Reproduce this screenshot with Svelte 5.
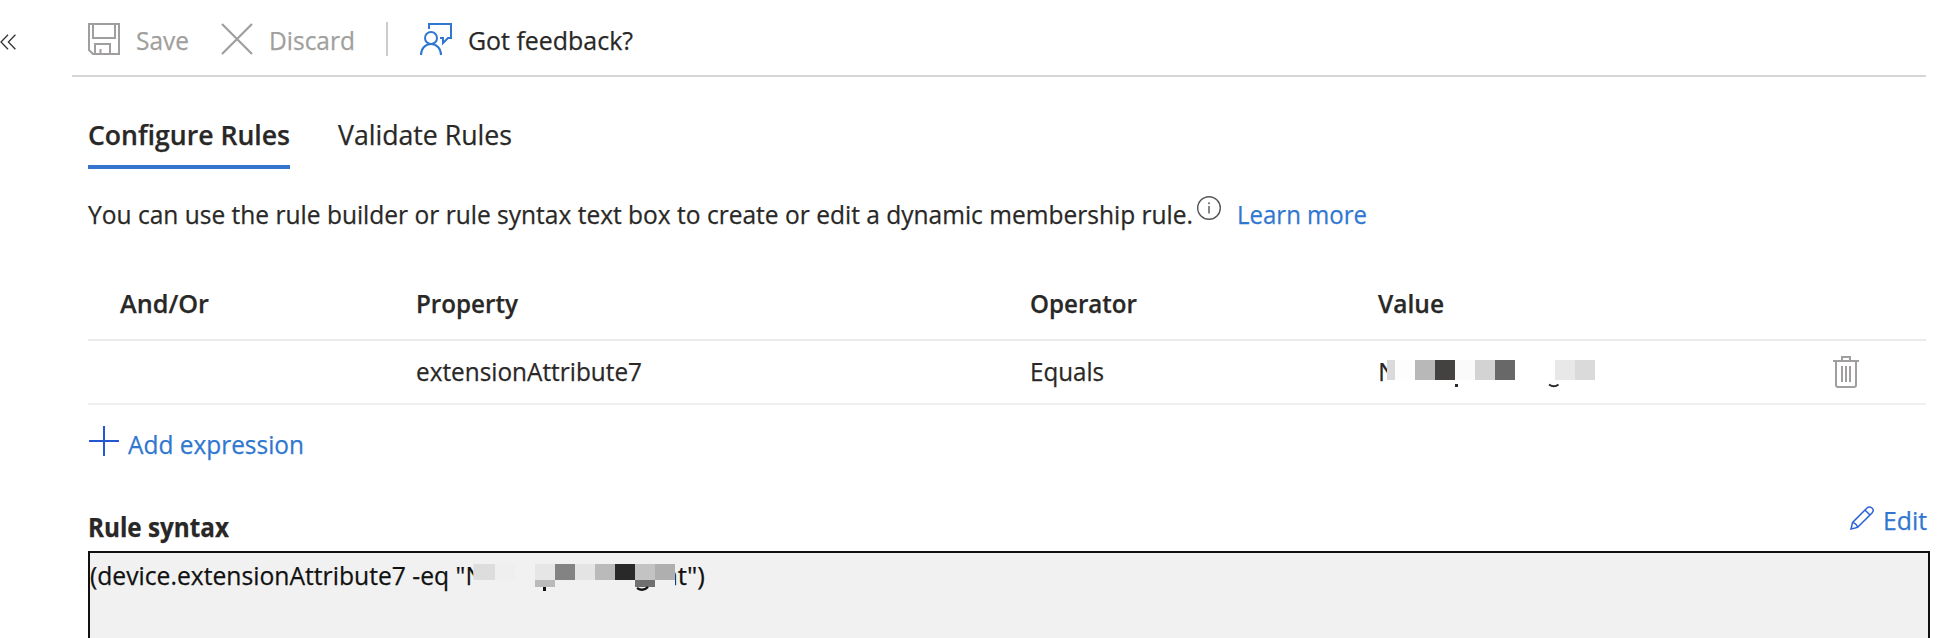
<script>
  const columns = [['And/Or', 89], ['Property', 102], ['Operator', 107], ['Value', 66]];
  const valueTiles = [
    [1387, 8, '#dadada'], [1395, 20, '#fdfdfd'], [1415, 20, '#b8b8b8'], [1435, 20, '#444241'],
    [1455, 20, '#fafafa'], [1475, 20, '#d3d3d3'], [1495, 20, '#686868'],
    [1555, 20, '#e8e8e8'], [1575, 20, '#dadada']
  ];
  const syntaxTiles = [
    [473.5, 21.5, 564, 16, '#dddddd'], [495, 20, 564, 16, '#efefef'], [535, 20, 564, 16, '#e6e6e6'],
    [555, 20, 564, 16, '#838383'], [575, 20, 564, 16, '#e4e4e4'], [595, 20, 564, 16, '#bababa'],
    [615, 20, 564, 16, '#292929'], [635, 20, 564, 16, '#c3c3c3'], [655, 20, 564, 16, '#afafaf'],
    [535, 20, 580, 7, '#bababa'], [635, 20, 580, 7, '#707070']
  ];

  // Condenses a label horizontally so that it fills a given width.
  function fit(node, width) {
    const natural = node.getBoundingClientRect().width;
    node.style.transform = `scaleX(${width / natural})`;
    node.style.marginRight = `${width - natural}px`;
  }
</script>

{#snippet label(text, width)}<span class="fit" use:fit={width}>{text}</span>{/snippet}

<div class="page">
  <aside class="rail">
    <svg width="18" height="16" viewBox="0 0 18 16" fill="none" stroke="#333" stroke-width="1.3"><path d="M8 .8 1 8l7 7.2M15.4 .8 8.4 8l7 7.2" /></svg>
  </aside>
  <main>
    <header class="toolbar">
      <button class="disabled save">
        <svg width="32" height="32" viewBox="0 0 32 32" fill="none" stroke="#a19f9d" stroke-width="2"><path d="M1 1h30v30H5l-4-4zM5 1v14h22V1M7 31V21h15v10M12.5 26v5" /></svg>
        {@render label('Save', 53)}
      </button>
      <button class="disabled discard">
        <svg width="32" height="32" viewBox="0 0 32 32" fill="none" stroke="#a19f9d" stroke-width="2.2"><path d="M1 1l30 30M31 1 1 31" /></svg>
        {@render label('Discard', 86)}
      </button>
      <i class="divider"></i>
      <button class="feedback">
        <svg width="32" height="32" viewBox="0 0 32 32" fill="none" stroke="#2f77d0" stroke-width="2"><path d="M9 6V1h22v14h-3l-5 5v-5h-3M1 32c0-6 4-11 10-11s10 5 10 11" /><circle cx="11" cy="15" r="6" /></svg>
        {@render label('Got feedback?', 165)}
      </button>
    </header>

    <section class="content">
      <nav class="tabs">
        <a class="active">{@render label('Configure Rules', 202)}</a>
        <a>{@render label('Validate Rules', 174)}</a>
      </nav>

      <p class="intro">
        {@render label('You can use the rule builder or rule syntax text box to create or edit a dynamic membership rule.', 1105)}
        <svg width="24" height="24" viewBox="0 0 24 24" fill="none" stroke="#555" stroke-width="1.4"><circle cx="12" cy="12" r="11.3" /><path d="M12 10v7.5M12 6.2v2" /></svg>
        <a class="link">{@render label('Learn more', 130)}</a>
      </p>

      <div class="row head">
        {#each columns as [name, width], i}<span class="h{i}">{@render label(name, width)}</span>{/each}
      </div>
      <div class="row data">
        <span></span>
        <span>{@render label('extensionAttribute7', 226)}</span>
        <span>{@render label('Equals', 74)}</span>
        <span class="value">N
          <svg class="mask" width="220" height="32" viewBox="1380 357 220 32">
            <path d="M1387 357h213v27h-213z" fill="#fff" />
            {#each valueTiles as [x, w, fill]}<rect {x} y="360" width={w} height="20" {fill} />{/each}
            <path d="M1455 384h3v3h-3z" fill="#292827" />
            <path d="M1549 384.500q5 3.500 9.500 0" stroke="#292827" stroke-width="2" fill="none" />
          </svg>
        </span>
        <svg width="26" height="32" viewBox="0 0 26 32" fill="none" stroke="#a19f9d" stroke-width="2"><path d="M0 5h26M9 5V1h8v4M3 5v24q0 2 2 2h16q2 0 2-2V5M9 10v16M13 10v16M17 10v16" /></svg>
      </div>

      <button class="add link">
        <svg width="30" height="30" viewBox="0 0 30 30" stroke="#2558d0" stroke-width="2"><path d="M15 0v30M0 15h30" /></svg>
        {@render label('Add expression', 176)}
      </button>

      <div class="syntax-head">
        <strong>{@render label('Rule syntax', 141)}</strong>
        <button class="edit link">
          <svg width="24" height="24" viewBox="0 0 24 24" fill="none" stroke="#2b62d6" stroke-width="1.5"><path d="M1 23l1.600-6.600L17 2q2.500-2 5 0t0 5L7.600 21.400zM2.600 16.400q4 1 5 5M15 4l5 5" /></svg>
          {@render label('Edit', 44)}
        </button>
      </div>
      <div class="box">
        {@render label('(device.extensionAttribute7 -eq "N', 394)}
        <span class="end">{@render label('nt")', 43)}</span>
        <svg class="redaction" width="206" height="40" viewBox="472 560 206 40">
          <path d="M473.500 562h201.500v25h-201.500z" fill="#f1f1f1" />
          {#each syntaxTiles as [x, w, y, h, fill]}<rect {x} {y} width={w} height={h} {fill} />{/each}
          <path d="M543 587h3v4h-3z" fill="#111" />
          <path d="M637 588q6 4 11-1" stroke="#111" stroke-width="2.4" fill="none" />
        </svg>
      </div>
    </section>
  </main>
</div>

<style>
  :global(body) { background: #fff; overflow: hidden; }
  .page { display: flex; height: 638px; overflow: hidden; font: 26px/36px "Open Sans", "Noto Sans", sans-serif; color: #292827; white-space: nowrap; -webkit-text-stroke: 0.25px currentColor; }
  .rail { width: 72px; flex: none; padding-top: 34px; box-sizing: border-box; }
  .fit { display: inline-block; flex: none; transform-origin: 0 50%; }
  svg { display: block; flex: none; }
  main { flex: none; width: 1858px; }
  button { all: unset; display: flex; align-items: center; }
  .link { color: #2f77d0; }
  .toolbar { display: flex; align-items: center; height: 77px; box-sizing: border-box; border-bottom: 2px solid #d6d6d6; width: 1854px; padding: 3px 0 0 16px; }
  .toolbar .fit { padding-top: 2px; }
  .disabled { color: #a19f9d; }
  .save { gap: 16px; width: 133px; }
  .discard { gap: 16px; width: 165px; }
  .divider { width: 2px; height: 34px; background: #ccc; margin-right: 32px; }
  .feedback { gap: 16px; }
  .content { padding-left: 16px; }
  .tabs { display: flex; gap: 48px; height: 92px; font-size: 27px; }
  .tabs a { display: block; box-sizing: border-box; padding-top: 40px; height: 92px; }
  .active { border-bottom: 4px solid #3474cf; width: 202px; font-weight: 600; }
  .intro { display: flex; margin: 27px 0 0; height: 37px; }
  .intro svg { margin: 0 16px 0 4px; }
  .row { display: grid; grid-template-columns: 328px 614px 348px 455px 26px; width: 1838px; box-sizing: border-box; align-items: center; }
  .head { height: 108px; padding-top: 33px; border-bottom: 2px solid #ebebeb; font-weight: 600; }
  .h0 { padding-left: 32px; }
  .data { height: 64px; border-bottom: 2px solid #f0f0f0; }
  .data > span { margin-top: -2px; }
  .value { position: relative; }
  .mask { position: absolute; left: 2px; top: 4px; }
  .add { margin-top: 21px; margin-left: 1px; gap: 9px; height: 36px; }
  .add svg { margin-top: -6px; }
  .syntax-head { display: flex; justify-content: space-between; width: 1839px; height: 89px; }
  .syntax-head strong { margin-top: 47px; font-weight: 700; }
  .edit { gap: 9px; height: 36px; margin-top: 40px; }
  .edit svg { margin-top: -4px; }
  .box { position: relative; width: 1842px; height: 120px; box-sizing: border-box; border: 2px solid #111; background: #f1f1f1; color: #111; padding-top: 4px; display: flex; }
  .end { margin-left: 178px; }
  .redaction { position: absolute; left: 382px; top: 7px; }
</style>
